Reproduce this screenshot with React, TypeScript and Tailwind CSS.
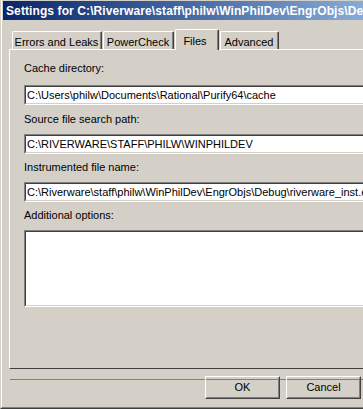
import React from 'react'

const tabs = [
  { label: 'Errors and Leaks', width: 90, selected: false },
  { label: 'PowerCheck', width: 71, selected: false },
  { label: 'Files', width: 44, selected: true },
  { label: 'Advanced', width: 59, selected: false },
]

function Tab({ label, width, selected }: { label: string; width: number; selected: boolean }) {
  if (selected) {
    return (
      <div
        className="relative z-10 -mb-px ml-px h-[21px] rounded-t-[2px] border-l border-t border-r border-l-white border-t-white border-r-[#404040] bg-[#d4d0c8]"
        style={{ width }}
      >
        <div className="flex h-full items-start justify-center border-r border-[#808080] pt-[3px] pr-[3px]">{label}</div>
      </div>
    )
  }
  return (
    <div
      className="ml-px h-[18px] rounded-t-[2px] border-l border-t border-r border-l-white border-t-white border-r-[#404040] first:ml-0"
      style={{ width }}
    >
      <div className="flex h-full items-start justify-center border-r border-[#808080] pt-[2px]">{label}</div>
    </div>
  )
}

function Field({ value, className = '' }: { value?: string; className?: string }) {
  return (
    <div className={`w-[400px] border border-t-[#808080] border-l-[#808080] border-b-white border-r-white ${className}`}>
      <div className="h-full border border-t-[#404040] border-l-[#404040] border-b-[#d4d0c8] border-r-[#d4d0c8] bg-white pl-[1px] pt-[2px] leading-[13px] whitespace-nowrap">
        {value}
      </div>
    </div>
  )
}

function Button({ children }: { children: React.ReactNode }) {
  return (
    <div className="h-[23px] w-[75px] border border-t-white border-l-white border-b-[#404040] border-r-[#404040]">
      <div className="flex h-full items-center justify-center border border-transparent border-b-[#808080] border-r-[#808080]">
        {children}
      </div>
    </div>
  )
}

export default function App() {
  return (
    <div className="relative h-[409px] w-[363px] overflow-hidden bg-[#d4d0c8] font-['Liberation_Sans',Arial,sans-serif] text-[11px] text-black">
      <div className="h-[409px] w-[440px] border-l border-b border-l-[#d4d0c8] border-b-[#404040]">
        <div className="flex h-full flex-col border-l border-b border-l-white border-b-[#808080] pl-px">
          <div className="mt-px flex h-[19px] items-center bg-gradient-to-r from-[#0a246a] to-[#a6caf0] pl-[3px] text-[12px] font-bold tracking-[0.1px] text-white whitespace-nowrap">
            Settings for C:\Riverware\staff\philw\WinPhilDev\EngrObjs\Debug
          </div>

          <div className="mt-[9px] flex h-[20px] items-end pl-[9px]">
            {tabs.map((t) => (
              <Tab key={t.label} {...t} />
            ))}
          </div>

          <div className="ml-[6px] h-[320px] w-[420px] border-t border-l border-b border-t-white border-l-white border-b-[#404040]">
            <div className="h-full border-b border-[#808080] pl-[14px]">
              <div className="mt-[12px] leading-[13px]">Cache directory:</div>
              <Field className="mt-[10px] h-[20px]" value="C:\Users\philw\Documents\Rational\Purify64\cache" />
              <div className="mt-[8px] leading-[13px]">Source file search path:</div>
              <Field className="mt-[8px] h-[20px]" value="C:\RIVERWARE\STAFF\PHILW\WINPHILDEV" />
              <div className="mt-[7px] leading-[13px]">Instrumented file name:</div>
              <Field className="mt-[8px] h-[20px]" value="C:\Riverware\staff\philw\WinPhilDev\EngrObjs\Debug\riverware_inst.exe" />
              <div className="mt-[7px] leading-[13px]">Additional options:</div>
              <Field className="mt-[8px] h-[77px]" />
            </div>
          </div>

          <div className="mt-[7px] flex gap-[6px] pl-[202px]">
            <Button>OK</Button>
            <Button>Cancel</Button>
          </div>
        </div>
      </div>
    </div>
  )
}
